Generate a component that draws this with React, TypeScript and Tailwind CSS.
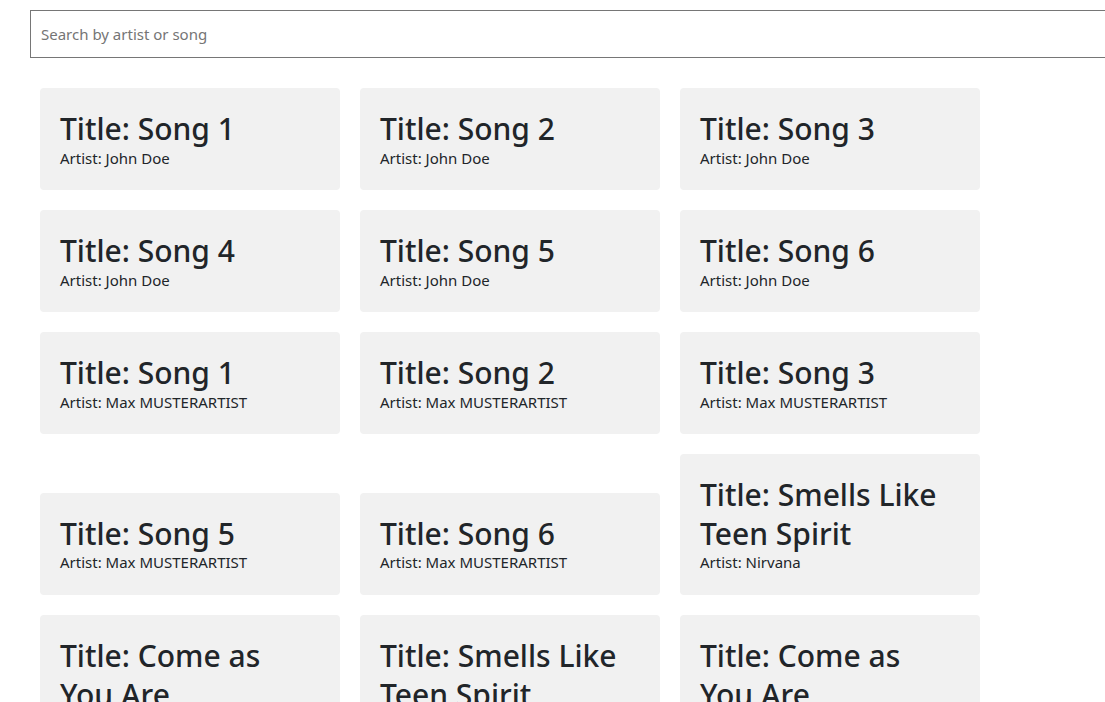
const songs = [
  { title: "Song 1", artist: "John Doe" },
  { title: "Song 2", artist: "John Doe" },
  { title: "Song 3", artist: "John Doe" },
  { title: "Song 4", artist: "John Doe" },
  { title: "Song 5", artist: "John Doe" },
  { title: "Song 6", artist: "John Doe" },
  { title: "Song 1", artist: "Max MUSTERARTIST" },
  { title: "Song 2", artist: "Max MUSTERARTIST" },
  { title: "Song 3", artist: "Max MUSTERARTIST" },
  { title: "Song 5", artist: "Max MUSTERARTIST" },
  { title: "Song 6", artist: "Max MUSTERARTIST" },
  { title: "Smells Like Teen Spirit", artist: "Nirvana" },
  { title: "Come as You Are", artist: "Nirvana" },
  { title: "Smells Like Teen Spirit", artist: "Nirvana" },
  { title: "Come as You Are", artist: "Nirvana" },
]

const SongCard = ({ title, artist }: { title: string; artist: string }) => {
  return (
    <div className="w-[300px] rounded bg-[#f1f1f1] px-5 pt-[22px] pb-[23.5px]">
      <h2 className="text-[30px] font-medium leading-[38.6px]">Title: {title}</h2>
      <p className="text-[15px] leading-[18px]">Artist: {artist}</p>
    </div>
  )
}

export default function App() {
  return (
    <div className="min-h-screen overflow-hidden bg-white font-['Noto_Sans',sans-serif] text-[#212529]">
      <div className="pt-[10px] pl-[30px]">
        <input
          type="text"
          placeholder="Search by artist or song"
          className="h-12 w-[1100px] border border-[#767676] px-[10px] text-[15px] outline-none placeholder:text-[#757575]"
        />
      </div>
      <div className="flex w-[1000px] flex-wrap items-end gap-x-5 gap-y-5 pt-[30px] pl-[40px]">
        {songs.map((s, i) => (
          <SongCard key={i} title={s.title} artist={s.artist} />
        ))}
      </div>
    </div>
  )
}
